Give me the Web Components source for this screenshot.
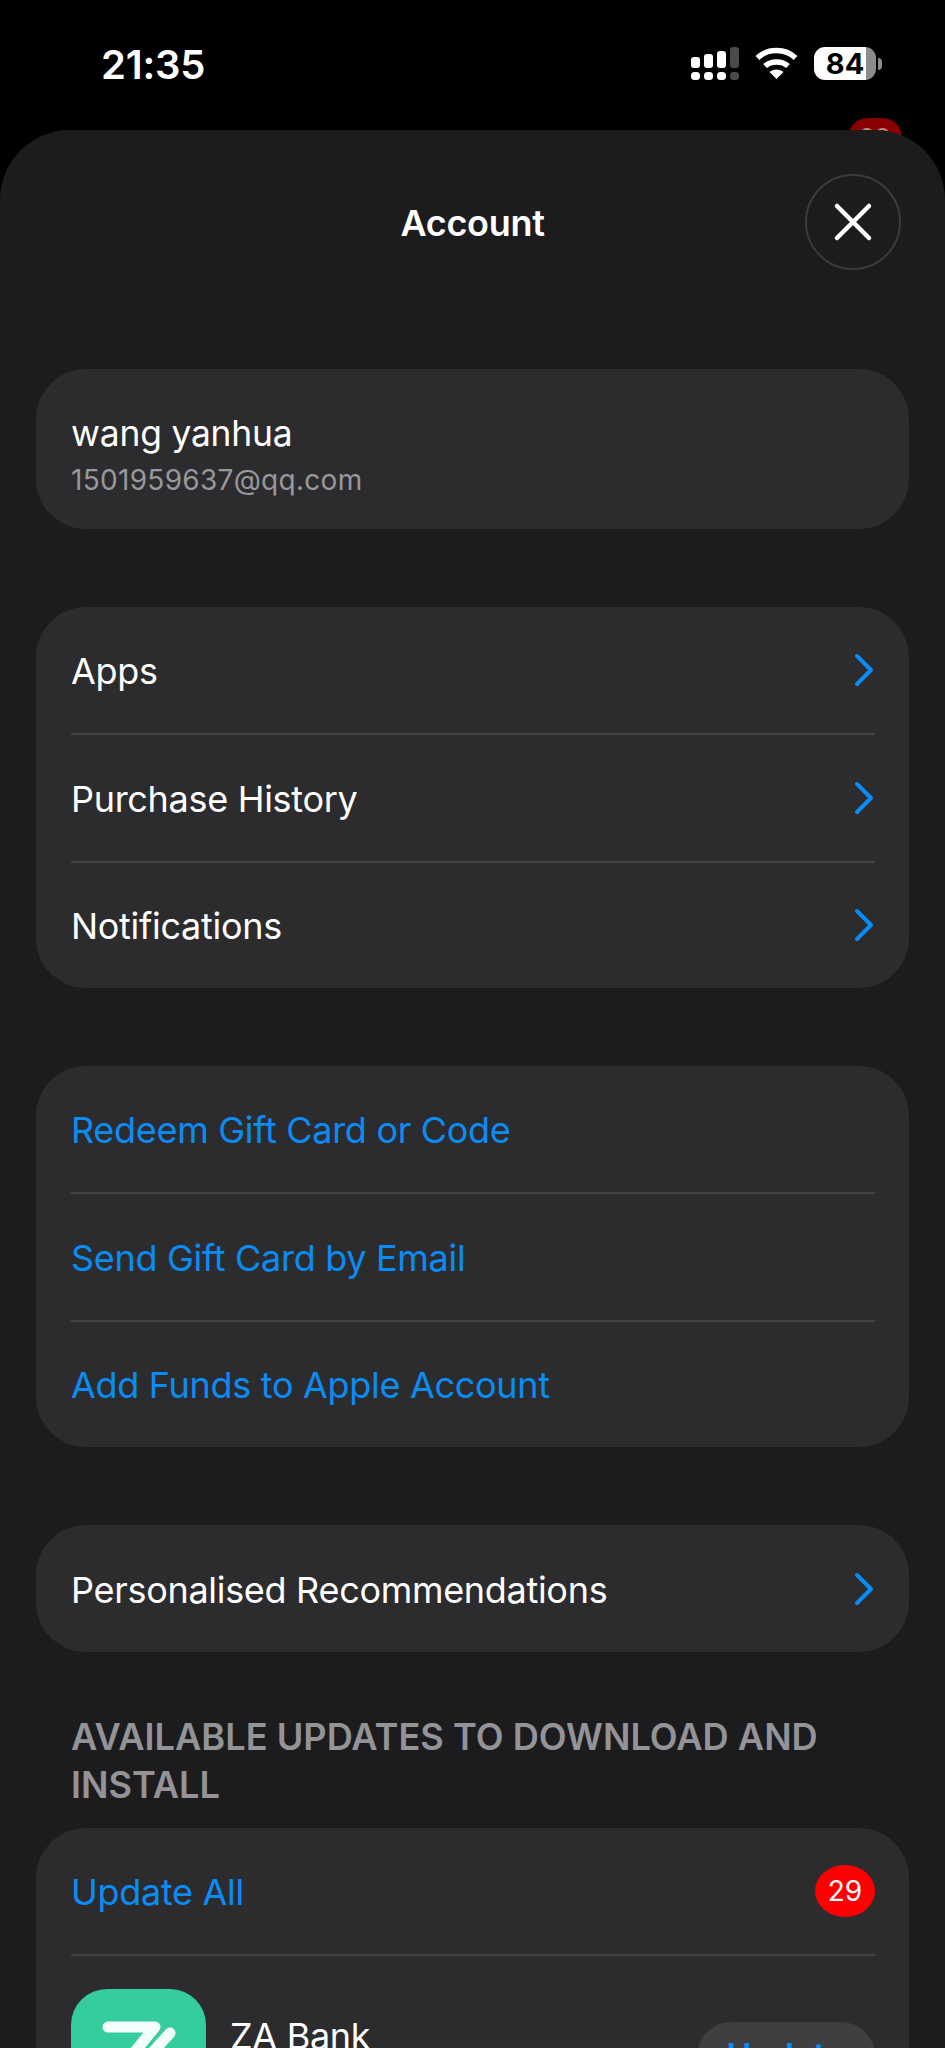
<!DOCTYPE html>
<html lang="en">
<head>
<meta charset="utf-8">
<title>Account</title>
<style>
  html, body {
    margin: 0;
    height: 2048px;
    overflow: hidden;
    background: #000;
    font-family: Inter, "Liberation Sans", sans-serif;
  }
</style>
</head>
<body>
<status-bar time="21:35" battery="84"></status-bar>
<account-sheet heading="Account">
  <group-card>
    <profile-row name="wang yanhua" email="1501959637@qq.com"></profile-row>
  </group-card>
  <group-card>
    <list-row label="Apps" chevron></list-row>
    <list-row label="Purchase History" chevron></list-row>
    <list-row label="Notifications" chevron></list-row>
  </group-card>
  <group-card>
    <list-row label="Redeem Gift Card or Code" link></list-row>
    <list-row label="Send Gift Card by Email" link></list-row>
    <list-row label="Add Funds to Apple Account" link></list-row>
  </group-card>
  <group-card>
    <list-row label="Personalised Recommendations" chevron></list-row>
  </group-card>
  <section-title>AVAILABLE UPDATES TO DOWNLOAD AND INSTALL</section-title>
  <group-card flush>
    <list-row label="Update All" link count="29"></list-row>
    <app-row name="ZA Bank"></app-row>
  </group-card>
</account-sheet>

<script>
class StatusBar extends HTMLElement {
  constructor() {
    super();
    this.attachShadow({ mode: 'open' });
  }

  connectedCallback() {
    this.shadowRoot.innerHTML = `
      <style>
        :host {
          display: flex;
          align-items: flex-start;
          justify-content: space-between;
          height: 130px;
          box-sizing: border-box;
          padding: 47px 63px 0 101px;
          color: #fff;
          position: relative;
        }
        .time {
          font-size: 40px;
          font-weight: 600;
          line-height: 36px;
          letter-spacing: -0.2px;
        }
        .icons {
          display: flex;
          align-items: flex-start;
          gap: 16px;
        }
        svg { display: block; }
        .battery {
          display: flex;
          align-items: center;
          gap: 2px;
        }
        .cell {
          width: 62px;
          height: 33px;
          border-radius: 11px;
          background: linear-gradient(90deg, #fff 84%, #8c8c8c 84%);
          color: #000;
          font-size: 29px;
          font-weight: 700;
          line-height: 33px;
          text-align: center;
        }
        .nub {
          width: 4px;
          height: 12px;
          border-radius: 0 4px 4px 0;
          background: #8c8c8c;
        }
        .behind {
          position: absolute;
          left: 848px;
          top: 118px;
          width: 54px;
          height: 40px;
          border-radius: 20px;
          background: #8b0000;
          color: #b88;
          font-size: 26px;
          line-height: 40px;
          text-align: center;
        }
      </style>
      <span class="time">${this.getAttribute('time')}</span>
      <div class="icons">
        <svg width="48" height="33" viewBox="0 0 48 33" fill="#fff">
          <rect x="0" y="10" width="9" height="11" rx="3"/>
          <rect x="13" y="7" width="9" height="14" rx="3"/>
          <rect x="26" y="4" width="9" height="17" rx="3"/>
          <rect x="39" y="0" width="9" height="21" rx="3" fill="#4a4a4a"/>
          <rect x="0" y="25" width="9" height="8" rx="3.5"/>
          <rect x="13" y="25" width="9" height="8" rx="3.5"/>
          <rect x="26" y="25" width="9" height="8" rx="3.5"/>
          <rect x="39" y="25" width="9" height="8" rx="3.5" fill="#4a4a4a"/>
        </svg>
        <svg width="43" height="32" viewBox="0 0 43 32" fill="none" stroke="#fff" stroke-width="5.5">
          <path d="M2.5 11 C12.5 1, 30.5 1, 40.5 11"/>
          <path d="M10 19 C16 13.5, 27 13.5, 33 19"/>
          <path d="M21.5 32 L14.5 25 C18 21.5, 25 21.5, 28.5 25 Z" fill="#fff" stroke="none"/>
        </svg>
        <div class="battery">
          <div class="cell">${this.getAttribute('battery')}</div>
          <div class="nub"></div>
        </div>
      </div>
      <div class="behind">29</div>`;
  }
}

class AccountSheet extends HTMLElement {
  constructor() {
    super();
    this.attachShadow({ mode: 'open' });
  }

  connectedCallback() {
    this.shadowRoot.innerHTML = `
      <style>
        :host {
          display: block;
          position: relative;
          height: 1918px;
          overflow: hidden;
          box-sizing: border-box;
          background: #1c1c1e;
          border-radius: 70px 70px 0 0;
          color: #fff;
        }
        header {
          display: flex;
          align-items: center;
          justify-content: center;
          height: 239px;
          box-sizing: border-box;
          padding-bottom: 54px;
          position: relative;
        }
        h1 {
          margin: 0;
          font-size: 36px;
          font-weight: 600;
          letter-spacing: -0.3px;
        }
        button {
          position: absolute;
          left: 805px;
          top: 44px;
          width: 96px;
          height: 96px;
          padding: 0;
          box-sizing: border-box;
          border: 2px solid #3b3b3d;
          border-radius: 50%;
          background: transparent;
          display: flex;
          align-items: center;
          justify-content: center;
        }
        main {
          display: flex;
          flex-direction: column;
          gap: 78px;
          padding: 0 36px;
        }
      </style>
      <header>
        <h1>${this.getAttribute('heading')}</h1>
        <button aria-label="Close">
          <svg width="40" height="40" viewBox="0 0 40 40" fill="none" stroke="#fff" stroke-width="4.5" stroke-linecap="round">
            <path d="M4 4 L36 36 M36 4 L4 36"/>
          </svg>
        </button>
      </header>
      <main><slot></slot></main>`;
  }
}

class GroupCard extends HTMLElement {
  constructor() {
    super();
    this.attachShadow({ mode: 'open' });
  }

  connectedCallback() {
    this.shadowRoot.innerHTML = `
      <style>
        :host {
          display: block;
          background: #2c2c2e;
          border-radius: 50px;
          overflow: hidden;
        }
        :host([flush]) {
          margin-top: -78px;
        }
      </style>
      <slot></slot>`;
  }
}

class ProfileRow extends HTMLElement {
  constructor() {
    super();
    this.attachShadow({ mode: 'open' });
  }

  connectedCallback() {
    this.shadowRoot.innerHTML = `
      <style>
        :host {
          display: flex;
          flex-direction: column;
          justify-content: center;
          height: 160px;
          box-sizing: border-box;
          padding: 15px 35px 0;
        }
        .name {
          font-size: 35.4px;
          line-height: 46px;
          letter-spacing: -0.2px;
          color: #fff;
        }
        .email {
          font-size: 28px;
          line-height: 46px;
          letter-spacing: 0.3px;
          color: #98989d;
        }
      </style>
      <span class="name">${this.getAttribute('name')}</span>
      <span class="email">${this.getAttribute('email')}</span>`;
  }
}

class ListRow extends HTMLElement {
  constructor() {
    super();
    this.attachShadow({ mode: 'open' });
  }

  connectedCallback() {
    const count = this.getAttribute('count');
    this.shadowRoot.innerHTML = `
      <style>
        :host {
          display: block;
          padding: 0 34px 0 35px;
          font-size: 36px;
          letter-spacing: -0.3px;
          color: #fff;
        }
        :host([link]) { color: #0a8cf5; }
        .row {
          display: flex;
          align-items: center;
          justify-content: space-between;
          height: 127.5px;
          box-sizing: border-box;
          border-top: 2px solid #424244;
        }
        :host(:first-child) .row { height: 126px; border-top: 0; }
        :host(:only-child) .row { height: 127px; }
        .label { padding-top: 2px; }
        .badge {
          width: 60px;
          height: 52px;
          border-radius: 50%;
          background: #ff0000;
          color: #fff;
          font-size: 28px;
          letter-spacing: 0;
          line-height: 52px;
          text-align: center;
        }
        svg { display: block; margin-right: 1px; }
      </style>
      <div class="row">
        <span class="label">${this.getAttribute('label')}</span>
        ${this.hasAttribute('chevron') ? `
          <svg width="20" height="34" viewBox="0 0 20 34" fill="none" stroke="#0a8cf5" stroke-width="4" stroke-linecap="round" stroke-linejoin="round">
            <path d="M3 3 L17 17 L3 31"/>
          </svg>` : ''}
        ${count ? `<span class="badge">${count}</span>` : ''}
      </div>`;
  }
}

class AppRow extends HTMLElement {
  constructor() {
    super();
    this.attachShadow({ mode: 'open' });
  }

  connectedCallback() {
    this.shadowRoot.innerHTML = `
      <style>
        :host {
          display: block;
          padding: 0 34px 0 35px;
          color: #fff;
        }
        .row {
          display: flex;
          align-items: flex-start;
          gap: 24px;
          padding-top: 33px;
          border-top: 2px solid #424244;
        }
        .icon { flex: none; display: block; }
        .name {
          flex: 1;
          font-size: 36px;
          line-height: 44px;
          letter-spacing: -0.3px;
          margin-top: 25px;
        }
        .update {
          flex: none;
          width: 178px;
          height: 68px;
          margin-top: 33px;
          border-radius: 34px;
          background: #3f3f41;
          color: #0a8cf5;
          font-size: 34px;
          font-weight: 600;
          line-height: 68px;
          text-align: center;
        }
      </style>
      <div class="row">
        <svg class="icon" width="135" height="135" viewBox="0 0 135 135">
          <rect width="135" height="135" rx="36" fill="#35cd9e"/>
          <path d="M37 38 H84 L40 92 H96" fill="none" stroke="#f2fffb" stroke-width="11" stroke-linecap="round" stroke-linejoin="round"/>
          <path d="M99 44 L72 74" fill="none" stroke="#f2fffb" stroke-width="11" stroke-linecap="round"/>
        </svg>
        <span class="name">${this.getAttribute('name')}</span>
        <span class="update">Update</span>
      </div>`;
  }
}

class SectionTitle extends HTMLElement {
  constructor() {
    super();
    this.attachShadow({ mode: 'open' });
  }

  connectedCallback() {
    this.shadowRoot.innerHTML = `
      <style>
        :host {
          display: block;
          margin-top: -17px;
          padding: 0 35px 19px;
          font-size: 36.2px;
          font-weight: 600;
          line-height: 48px;
          color: #939398;
        }
      </style>
      <slot></slot>`;
  }
}

customElements.define('status-bar', StatusBar);
customElements.define('account-sheet', AccountSheet);
customElements.define('group-card', GroupCard);
customElements.define('profile-row', ProfileRow);
customElements.define('list-row', ListRow);
customElements.define('app-row', AppRow);
customElements.define('section-title', SectionTitle);
</script>
</body>
</html>
